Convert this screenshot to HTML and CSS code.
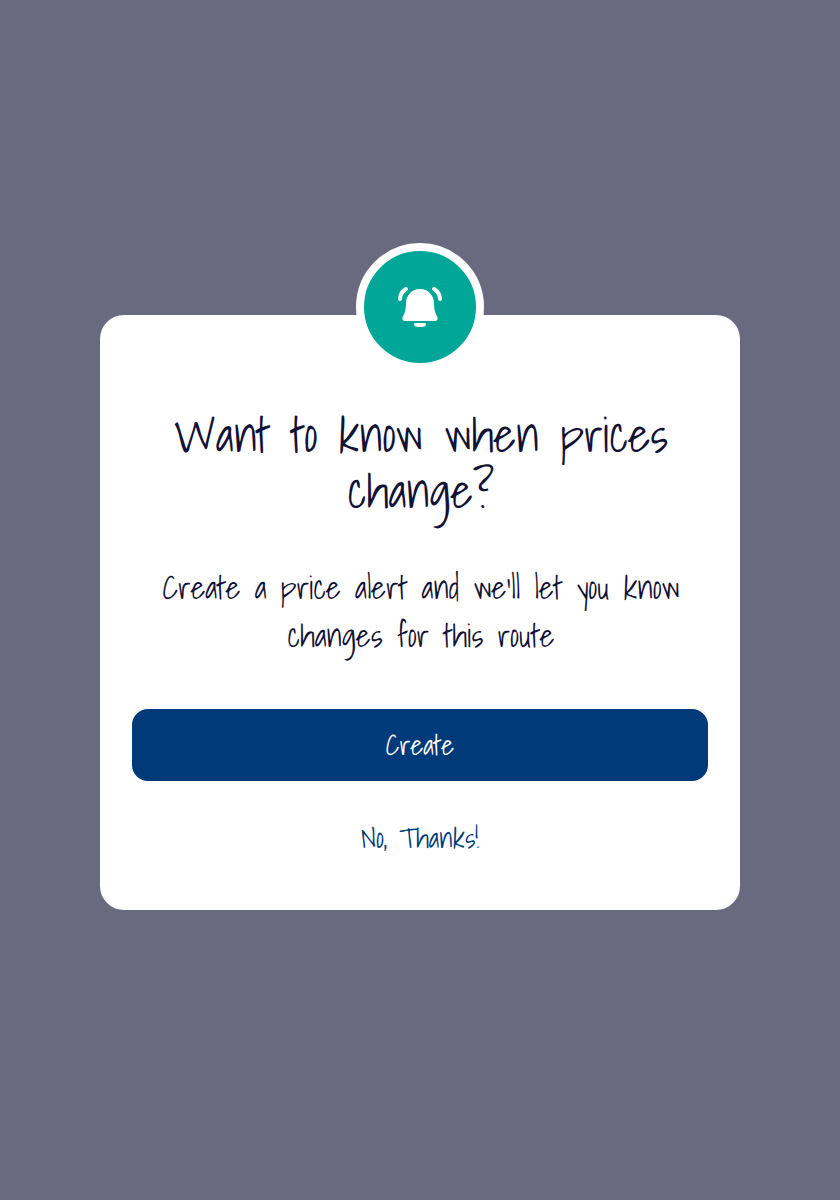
FILE: index.html
```html
<!DOCTYPE html>
<html lang="en">
<head>
<meta charset="utf-8">
<title>Price alert</title>
<link rel="stylesheet" href="styles.css">
</head>
<body>
<main class="dialog">
  <div class="badge">
    <svg class="bell" viewBox="0 0 48 48" aria-hidden="true">
      <path class="solid" d="M24 6C16.2 6 10 12.2 10 20C10 26.500 9 29.500 7 33.2C5.4 36.2 7 38 9.500 38H38.500C41 38 42.6 36.2 41 33.2C39 29.500 38 26.500 38 20C38 12.2 31.8 6 24 6Z"/>
      <path class="solid" d="M19.500 40H28.500C31.200 40 30.300 44 26 44H22C17.700 44 16.800 40 19.500 40Z"/>
      <path class="wave" d="M10 6C6.500 8.2 4 11.500 4 16M38 6C41.500 8.2 44 11.500 44 16"/>
    </svg>
  </div>
  <h1 class="title">Want to know when prices change?</h1>
  <p class="copy">Create a price alert and we'll let you know changes for this route</p>
  <button class="create">Create</button>
  <button class="dismiss">No, Thanks!</button>
</main>
</body>
</html>
```

FILE: styles.css
```css
* { box-sizing: border-box; }
body {
  margin: 0;
  height: 1200px;
  padding-top: 315px;
  background: #69697f;
  color: #111236;
  font-family: "Shadows Into Light", "Shadows Into Light Two", Lato, "Liberation Sans", sans-serif;
  text-rendering: geometricPrecision;
}
.dialog {
  width: 640px;
  height: 595px;
  margin: 0 auto;
  padding: 0 32px;
  display: flex;
  flex-direction: column;
  text-align: center;
  background: #fff;
  border-radius: 24px;
}
.badge {
  width: 128px;
  height: 128px;
  flex: none;
  margin: -72px auto 0;
  border: 8px solid #fff;
  border-radius: 50%;
  background: #00a698;
  display: flex;
  align-items: center;
  justify-content: center;
}
.bell { width: 48px; height: 48px; }
.solid { fill: #fff; }
.wave { fill: none; stroke: #fff; stroke-width: 4; stroke-linecap: round; }
.title {
  margin: 36px 0 0;
  padding-left: 2px;
  font-size: 48px;
  line-height: 56px;
  font-weight: 400;
}
.copy {
  margin: 44px 0 0;
  padding-left: 2px;
  font-size: 32px;
  line-height: 48px;
}
.create, .dismiss {
  height: 72px;
  flex: none;
  border: 0;
  padding: 0;
  font: inherit;
  font-size: 28px;
  text-rendering: inherit;
}
.create {
  margin-top: 50px;
  border-radius: 16px;
  background: #003a78;
  color: #fff;
}
.dismiss {
  margin-top: 21px;
  background: none;
  color: #003a78;
}
```
